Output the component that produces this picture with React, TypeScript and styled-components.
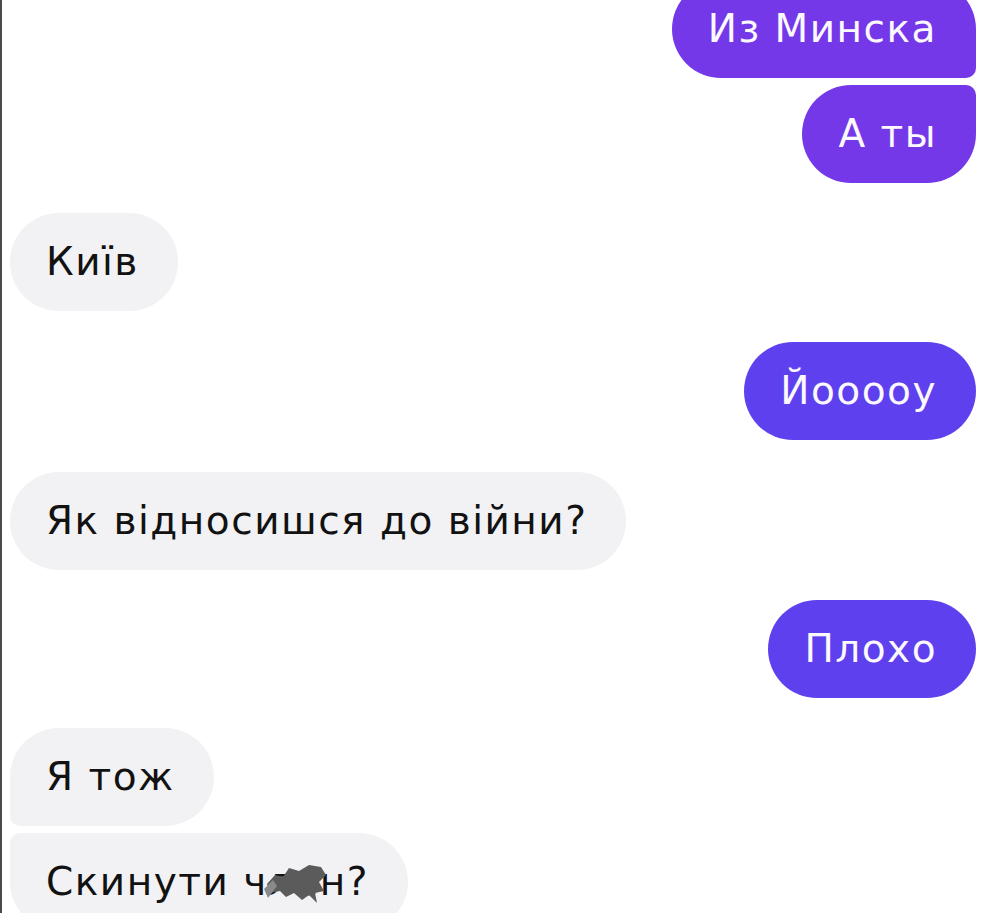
import styled, { createGlobalStyle, css } from "styled-components";

const GlobalStyle = createGlobalStyle`
  html, body {
    margin: 0;
    padding: 0;
    background: #ffffff;
  }
  body {
    font-family: "DejaVu Sans", "Liberation Sans", sans-serif;
    overflow: hidden;
  }
`;

const Screen = styled.div`
  width: 992px;
  height: 913px;
  box-sizing: border-box;
  border-left: 2px solid #4a4a4a;
  overflow: hidden;
  background: #ffffff;
`;

const Thread = styled.div`
  display: flex;
  flex-direction: column;
  margin-top: -20px;
  padding: 0 16px 0 8px;
`;

type Side = "out" | "in";
type Corner = "first" | "last";

const Bubble = styled.div<{ $side: Side; $corner?: Corner; $gap: number; $tone?: "violet" | "blue" }>`
  position: relative;
  align-self: ${(p) => (p.$side === "out" ? "flex-end" : "flex-start")};
  margin-top: ${(p) => p.$gap}px;
  padding: 24px 39px 25px 36px;
  font-size: 39px;
  line-height: 49px;
  letter-spacing: 1.5px;
  white-space: nowrap;
  border-radius: 49px;
  color: ${(p) => (p.$side === "out" ? "#fbf8ff" : "#121212")};
  background: ${(p) =>
    p.$side === "in" ? "#f2f2f4" : p.$tone === "violet" ? "#7438e8" : "#5f40ef"};

  ${(p) =>
    p.$side === "out" && p.$corner === "first" &&
    css`
      border-bottom-right-radius: 10px;
    `}
  ${(p) =>
    p.$side === "out" && p.$corner === "last" &&
    css`
      border-top-right-radius: 10px;
    `}
  ${(p) =>
    p.$side === "in" && p.$corner === "first" &&
    css`
      border-bottom-left-radius: 10px;
    `}
  ${(p) =>
    p.$side === "in" && p.$corner === "last" &&
    css`
      border-top-left-radius: 10px;
    `}
`;

const Hidden = styled.span`
  position: relative;
  display: inline-block;
`;

const Scribble = styled.svg`
  position: absolute;
  left: -4px;
  top: 5px;
  width: 64px;
  height: 42px;
`;

export default function App() {
  return (
    <>
      <GlobalStyle />
      <Screen>
        <Thread>
          <Bubble $side="out" $corner="first" $tone="violet" $gap={0}>
            Из Минска
          </Bubble>
          <Bubble $side="out" $corner="last" $tone="violet" $gap={7}>
            А ты
          </Bubble>
          <Bubble $side="in" $gap={30}>
            Київ
          </Bubble>
          <Bubble $side="out" $gap={31}>
            Йоооoy
          </Bubble>
          <Bubble $side="in" $gap={32}>
            Як відносишся до війни?
          </Bubble>
          <Bubble $side="out" $gap={30}>
            Плохо
          </Bubble>
          <Bubble $side="in" $corner="first" $gap={30}>
            Я тож
          </Bubble>
          <Bubble $side="in" $corner="last" $gap={7}>
            Скинути ч
            <Hidden>
              ле
              <Scribble viewBox="0 0 64 42">
                <path
                  d="M3 22 L11 13 L19 15 L25 6 L35 9 L45 3 L57 5 L62 13 L55 20 L60 29 L51 31 L53 41 L45 33 L38 38 L30 31 L22 35 L16 29 L6 31 Z"
                  fill="#5b5b5b"
                />
                <path d="M0 27 L9 18 L13 24 L4 36 Z" fill="#8a8a8a" />
              </Scribble>
            </Hidden>
            н?
          </Bubble>
        </Thread>
      </Screen>
    </>
  );
}
